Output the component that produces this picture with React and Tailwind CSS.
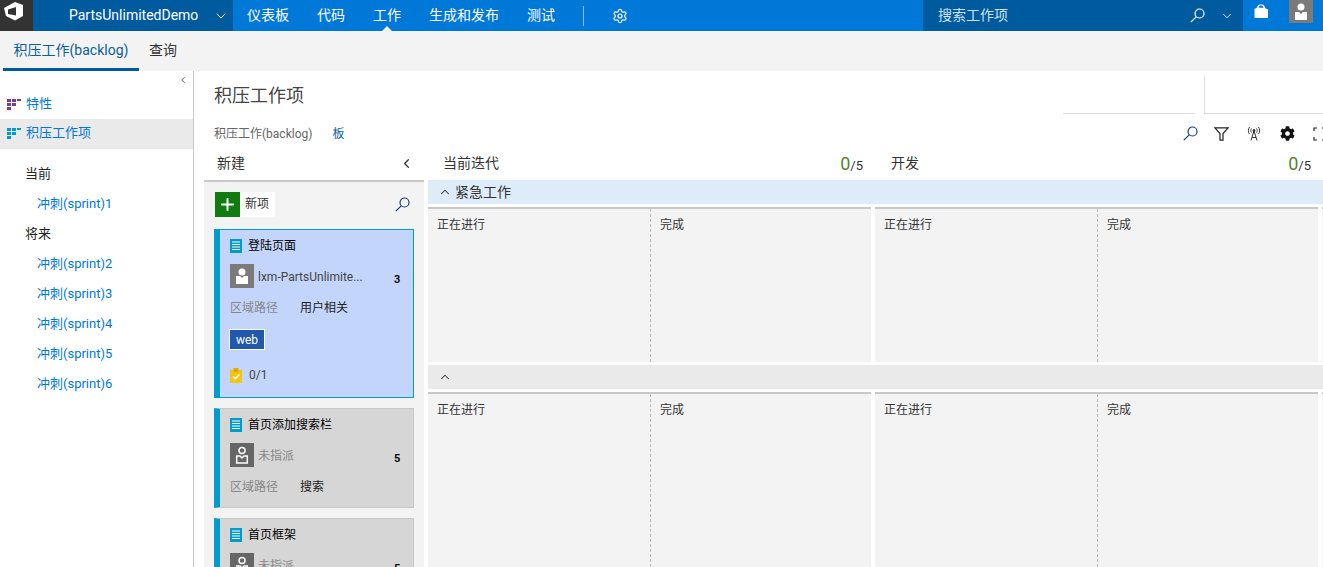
import React from "react";
import { ChevronDown, ChevronLeft, ChevronUp, Settings, Plus } from "lucide-react";
import { FaCog } from "react-icons/fa";

const font = "font-['Roboto','Noto_Sans_CJK_SC',sans-serif]";

function GridIcon({ color }) {
  return (
    <svg width="14" height="11" viewBox="0 0 14 11" className="shrink-0">
      <rect x="0" y="0" width="4" height="3" fill={color} />
      <rect x="5" y="0" width="4" height="3" fill={color} />
      <rect x="10" y="0" width="4" height="2" fill={color} />
      <rect x="0" y="4" width="4" height="3" fill={color} />
      <rect x="5" y="4" width="4" height="3" fill={color} />
      <rect x="0" y="8" width="4" height="3" fill={color} />
    </svg>
  );
}

function SearchIcon({ color, className }) {
  return (
    <svg width="15" height="15" viewBox="0 0 15 15" fill="none" stroke={color} strokeWidth="1.2" className={className}>
      <circle cx="9.500" cy="5.500" r="4.500" />
      <path d="M6.200 8.800L0.800 14.200" />
    </svg>
  );
}

function StoryIcon() {
  return (
    <svg width="12" height="14" viewBox="0 0 12 14" className="shrink-0">
      <rect width="12" height="14" fill="#009ccc" />
      <path d="M2 3h8M2 5.500h8M2 8h8M2 10.500h8" stroke="#fff" strokeWidth="1" />
    </svg>
  );
}

function Avatar({ assigned }) {
  return (
    <svg width="24" height="24" viewBox="0 0 24 24" className="shrink-0">
      <rect width="24" height="24" fill={assigned ? "#7a7a7a" : "#666"} />
      {assigned ? (
        <>
          <circle cx="12" cy="8" r="3.500" fill="#fff" />
          <path d="M6 12h4l2 2 2-2h4v8H6z" fill="#fff" />
        </>
      ) : (
        <>
          <circle cx="12" cy="7.500" r="3" fill="none" stroke="#fff" strokeWidth="1.500" />
          <path d="M6.700 13h3.300l2 2 2-2h3.300v7H6.700z" fill="none" stroke="#fff" strokeWidth="1.500" />
        </>
      )}
    </svg>
  );
}

function Card({ title, owner, assigned, points, tag, area, selected }) {
  return (
    <div
      className={`mx-[10px] mb-[10px] shrink-0 border border-l-[6px] border-l-[#009ccc] pl-[10px] ${
        selected ? "h-[169px] border-[#009ccc] bg-[#c3d5fb]" : "h-[100px] border-[#c8c8c8] bg-[#d6d6d6]"
      }`}
    >
      <div className="flex h-[30px] items-center gap-[6px] pt-[1px] text-[12px] text-black">
        <StoryIcon />
        <span>{title}</span>
      </div>
      <div className="mt-[4px] flex h-[24px] items-center gap-[4px] text-[12px]">
        <Avatar assigned={assigned} />
        <span className={`mt-[1px] w-[112px] ${assigned ? "text-[#444]" : "text-[#888]"}`}>{owner}</span>
        <span className="ml-[20px] mt-[8px] text-[11px] font-semibold text-black">{points}</span>
      </div>
      <div className="mt-[10px] flex h-[20px] items-center text-[12px]">
        <span className="w-[70px] text-[#888]">区域路径</span>
        <span className="text-[#222]">{area}</span>
      </div>
      {tag && (
        <div className="-ml-[1px] mt-[11px] flex h-[21px] w-[36px] items-center justify-center border border-white bg-[#2059ab] text-[12px] text-white">
          {tag}
        </div>
      )}
      {selected && (
        <div className="mt-[16px] flex items-center gap-[7px] text-[12px] text-[#444]">
          <svg width="12" height="15" viewBox="0 0 12 15">
            <rect y="2" width="12" height="13" fill="#f2c512" />
            <rect x="3.500" y="0" width="5" height="4" fill="#d9a90a" />
            <path d="M3 8.500l2.200 2.200L9.500 6.500" stroke="#fff" strokeWidth="1.500" fill="none" />
          </svg>
          <span>0/1</span>
        </div>
      )}
    </div>
  );
}

function Group({ empty }) {
  return (
    <div className="flex w-[443px] shrink-0 border-t-2 border-[#c8c8c8] bg-[#f3f3f3] text-[12px] text-[#333]">
      <div className="w-[223px] border-r border-dashed border-[#bbb] pl-[9px] pt-[7px]">{!empty && "正在进行"}</div>
      <div className="flex-1 pl-[9px] pt-[7px]">{!empty && "完成"}</div>
    </div>
  );
}

function Cells({ grow }) {
  return (
    <div className={`flex shrink-0 gap-[4px] ${grow ? "h-[175px]" : "h-[155px]"}`}>
      <Group />
      <Group />
      <Group empty />
    </div>
  );
}

function Count() {
  return (
    <span className="text-[#333]">
      <span className="text-[18px] text-[#5c7f2e]">0</span>
      <span className="text-[13px]">/5</span>
    </span>
  );
}

export default function App() {
  const navItems = ["仪表板", "代码", "工作", "生成和发布", "测试"];
  const sprints = ["冲刺(sprint)2", "冲刺(sprint)3", "冲刺(sprint)4", "冲刺(sprint)5", "冲刺(sprint)6"];

  return (
    <div className={`flex h-[567px] w-[1323px] flex-col overflow-hidden bg-white ${font}`}>
      {/* 상단 네비게이션 */}
      <div className="flex h-[31px] shrink-0 items-center bg-[#0078d7] text-[14px] text-white">
        <div className="flex h-full w-[33px] items-start bg-[#333] pl-[4px] pt-[2px]">
          <svg width="20" height="19" viewBox="0 0 20 19">
            <path
              fillRule="evenodd"
              d="M0 6L11 0l8 3v11l-8 4.500L2 14zM4 7.500v4.500l8 1.500V5z"
              fill="#fff"
            />
          </svg>
        </div>
        <div className="flex h-full w-[200px] items-center bg-[#005a9e] pl-[36px]">
          <span className="w-[144px]">PartsUnlimitedDemo</span>
          <ChevronDown size={16} strokeWidth={1.500} />
        </div>
        <div className="relative flex h-full items-center">
          {navItems.map((item) => (
            <div key={item} className="relative flex h-full items-center px-[14px]">
              {item}
              {item === "工作" && (
                <div className="absolute bottom-0 left-1/2 -ml-[5px] h-0 w-0 border-x-[5px] border-b-[5px] border-x-transparent border-b-[#f3f3f3]" />
              )}
            </div>
          ))}
        </div>
        <div className="ml-[14px] h-[20px] w-px bg-[#8fc3ee]" />
        <Settings size={16} strokeWidth={1.800} className="ml-[28px]" />
        <div className="ml-auto flex h-full w-[320px] items-center bg-[#005a9e] pl-[15px] pr-[9px] text-[#cde3f5]">
          <span>搜索工作项</span>
          <SearchIcon color="#fff" className="ml-auto" />
          <ChevronDown size={14} strokeWidth={1.500} className="ml-[15px] text-white" />
        </div>
        <div className="flex h-full w-[80px] items-start pl-[11px] pt-[4px]">
          <svg width="14" height="14" viewBox="0 0 14 14">
            <path d="M0.500 5L3 3.500C3.500 1.500 4.500 0.500 6 0.500h2c1.500 0 3 2 3.500 4l2.500 1v8.500H0.500zM4.500 3.500l5 .5C9 2.500 8.500 1.500 7.500 1.500h-1.500c-.8 0-1.300 1-1.500 2z" fillRule="evenodd" fill="#fff" />
          </svg>
          <div className="-mt-[4px] ml-[21px] flex h-[23px] w-[24px] items-center justify-center bg-[#7a7a7a]">
            <svg width="14" height="18" viewBox="0 0 14 18">
              <circle cx="7" cy="4" r="3.500" fill="#fff" />
              <path d="M1 9h4l2 2 2-2h4v8H1z" fill="#fff" />
            </svg>
          </div>
        </div>
      </div>

      {/* 서브 탭 */}
      <div className="flex h-[40px] shrink-0 bg-[#f3f3f3] pl-[3px] text-[14px]">
        <div className="flex h-full w-[136px] items-center justify-center border-b-[3px] border-[#005a9e] pt-[1px] text-[#0a5f99]">
          积压工作(backlog)
        </div>
        <div className="flex h-full items-center pb-[1px] pl-[10px] text-[#333]">查询</div>
      </div>

      <div className="flex min-h-0 flex-1">
        {/* 사이드바 */}
        <div className="w-[194px] shrink-0 border-r border-[#c8c8c8] text-[13px]">
          <div className="flex h-[18px] justify-end pr-[5px] pt-[4px]">
            <ChevronLeft size={10} className="text-[#444]" strokeWidth={2} />
          </div>
          <div className="flex h-[30px] items-center gap-[5px] pl-[7px] text-[#0078d7]">
            <GridIcon color="#773b93" />
            <span>特性</span>
          </div>
          <div className="flex h-[30px] items-center gap-[5px] bg-[#eaeaea] pb-[2px] pl-[7px] text-[#0078d7]">
            <GridIcon color="#009ccc" />
            <span>积压工作项</span>
          </div>
          <div className="mt-[10px] flex h-[30px] items-center pl-[25px] text-[#222]">当前</div>
          <div className="flex h-[30px] items-center pl-[37px] text-[#0078d7]">冲刺(sprint)1</div>
          <div className="flex h-[30px] items-center pl-[25px] text-[#222]">将来</div>
          {sprints.map((s) => (
            <div key={s} className="flex h-[30px] items-center pl-[37px] text-[#0078d7]">
              {s}
            </div>
          ))}
        </div>

        {/* 메인 */}
        <div className="flex min-w-0 flex-1 flex-col">
          <div className="relative h-[79px] shrink-0 pl-[20px]">
            <div className="pt-[11px] text-[18px] leading-[28px] text-[#444]">积压工作项</div>
            <div className="mt-[15px] flex items-center text-[12px] leading-[18px]">
              <span className="text-[#666]">积压工作(backlog)</span>
              <span className="ml-[20px] text-[#0a5f99]">板</span>
            </div>
            <div className="absolute right-0 top-[5px] flex">
              <div className="h-[38px] w-[132px] border-b border-[#ddd]" />
              <div className="ml-[9px] h-[38px] w-[119px] border-b border-l border-[#ddd]" />
            </div>
            <div className="absolute right-0 top-[55px] flex items-center text-[#222]">
              <SearchIcon color="#1a3a7a" />
              <svg width="15" height="14" viewBox="0 0 15 14" className="ml-[16px]" fill="none" stroke="#222" strokeWidth="1.200">
                <path d="M0.800 0.800h13.400L9 6.500v6.700H6V6.500z" />
              </svg>
              <svg width="14" height="15" viewBox="0 0 14 15" className="ml-[18px]" fill="none" stroke="#333">
                <circle cx="7" cy="4.500" r="1" fill="#333" />
                <path d="M4 14.500L7 5l3 9.500M5 11.500h4M4.500 2.500c-1 1.300-1 2.700 0 4M9.500 2.500c1 1.300 1 2.700 0 4M2.500 1C1 3 1 6 2.500 8M11.500 1c1.500 2 1.500 5 0 7" />
              </svg>
              <FaCog size={15} className="ml-[19px] text-[#111]" />
              <svg width="10" height="14" viewBox="0 0 10 14" className="ml-[18px]" fill="none" stroke="#222" strokeWidth="1.200">
                <path d="M4 1H1v3M1 10v3h3M10 1H9M10 13H9" />
              </svg>
            </div>
          </div>

          <div className="flex min-h-0 flex-1 pl-[10px]">
            {/* 새 항목 컬럼 */}
            <div className="flex w-[220px] shrink-0 flex-col">
              <div className="flex h-[30px] shrink-0 items-center justify-between pb-[3px] pl-[13px] pr-[10px] text-[14px] text-[#333]">
                <span>新建</span>
                <ChevronLeft size={15} strokeWidth={2} />
              </div>
              <div className="flex min-h-0 flex-1 flex-col overflow-hidden border-t-2 border-[#c8c8c8] bg-[#f3f3f3]">
                <div className="flex h-[47px] shrink-0 items-center pb-[3px] pl-[11px] pr-[14px] text-[12px] text-[#333]">
                  <div className="flex h-[25px] items-center bg-white pr-[6px]">
                    <div className="flex h-[25px] w-[25px] items-center justify-center bg-[#107c10]">
                      <Plus size={19} strokeWidth={2.500} className="text-white" />
                    </div>
                    <span className="ml-[5px]">新项</span>
                  </div>
                  <SearchIcon color="#1a3a7a" className="ml-auto" />
                </div>
                <Card selected title="登陆页面" owner="lxm-PartsUnlimite..." assigned points="3" area="用户相关" tag="web" />
                <Card title="首页添加搜索栏" owner="未指派" points="5" area="搜索" />
                <Card title="首页框架" owner="未指派" points="5" area="搜索" />
              </div>
            </div>

            {/* 보드 */}
            <div className="ml-[4px] flex min-w-0 flex-1 flex-col overflow-hidden">
              <div className="flex h-[30px] shrink-0 items-center pb-[3px] text-[14px] text-[#333]">
                <div className="flex w-[447px] items-center justify-between pl-[15px] pr-[12px]">
                  <span>当前迭代</span>
                  <Count />
                </div>
                <div className="flex flex-1 items-center justify-between pl-[16px] pr-[12px]">
                  <span>开发</span>
                  <Count />
                </div>
              </div>
              <div className="flex h-[24px] shrink-0 items-center gap-[3px] bg-[#deecf9] pl-[10px] text-[13px] text-[#333]">
                <ChevronUp size={14} strokeWidth={1.800} />
                <span className="text-[14px]">紧急工作</span>
              </div>
              <div className="mt-[3px]">
                <Cells />
              </div>
              <div className="mt-[3px] flex h-[24px] shrink-0 items-center bg-[#eaeaea] pl-[10px]">
                <ChevronUp size={14} strokeWidth={1.800} className="text-[#333]" />
              </div>
              <div className="mt-[3px]">
                <Cells grow />
              </div>
            </div>
          </div>
        </div>
      </div>
    </div>
  );
}
